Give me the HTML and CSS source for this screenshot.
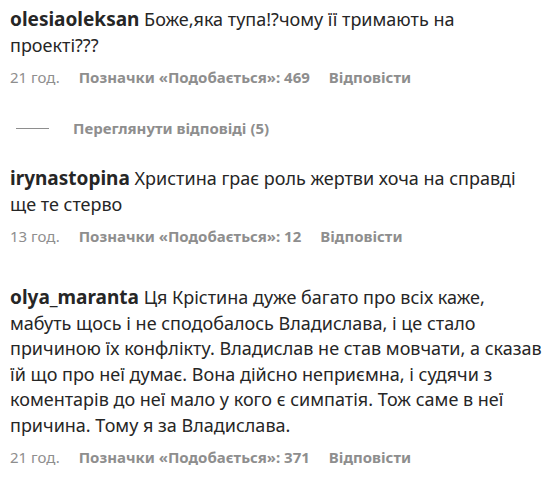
FILE: index.html
```html
<!DOCTYPE html>
<html>
<head>
<meta charset="utf-8">
<link rel="stylesheet" href="styles.css">
</head>
<body>
<ul class="comments">
  <li class="comment has-replies">
    <p class="text"><span class="user">olesiaoleksan</span> Боже,яка тупа!?чому її тримають на<br>проекті???</p>
    <div class="meta"><span class="time">21 год.</span><span class="likes">Позначки «Подобається»: 469</span><span class="reply">Відповісти</span></div>
    <div class="replies"><span class="dash"></span><span class="view">Переглянути відповіді (5)</span></div>
  </li>
  <li class="comment">
    <p class="text"><span class="user">irynastopina</span> Христина грає роль жертви хоча на справді<br>ще те стерво</p>
    <div class="meta"><span class="time">13 год.</span><span class="likes">Позначки «Подобається»: 12</span><span class="reply">Відповісти</span></div>
  </li>
  <li class="comment">
    <p class="text"><span class="user">olya_maranta</span> Ця Крістина дуже багато про всіх каже,<br>мабуть щось і не сподобалось Владислава, і це стало<br>причиною їх конфлікту. Владислав не став мовчати, а сказав<br>їй що про неї думає. Вона дійсно неприємна, і судячи з<br>коментарів до неї мало у кого є симпатія. Тож саме в неї<br>причина. Тому я за Владислава.</p>
    <div class="meta"><span class="time">21 год.</span><span class="likes">Позначки «Подобається»: 371</span><span class="reply">Відповісти</span></div>
  </li>
</ul>
</body>
</html>
```

FILE: styles.css
```css
html, body {
  margin: 0;
  padding: 0;
  background: #ffffff;
}
body {
  font-family: "Noto Sans", "Open Sans", sans-serif;
  color: #262626;
}
.comments {
  list-style: none;
  margin: 0;
  padding: 7px 0 0 10px;
  width: 534px;
}
.comment {
  display: flex;
  flex-direction: column;
  padding-bottom: 39px;
}
.comment.has-replies {
  padding-bottom: 28px;
}
.comment:last-child {
  padding-bottom: 0;
}
.text {
  margin: 0;
  font-size: 18px;
  line-height: 25.5px;
  white-space: nowrap;
}
.user {
  font-size: 19px;
  font-weight: 700;
}
.meta {
  display: flex;
  gap: 19px;
  margin-top: 9px;
  font-size: 15px;
  line-height: 20px;
  color: #8e8e8e;
}
.likes, .reply {
  font-weight: 700;
}
.replies {
  display: flex;
  align-items: center;
  gap: 24px;
  margin-top: 31px;
  padding-left: 6px;
  font-size: 15px;
  line-height: 20px;
  color: #8e8e8e;
  font-weight: 700;
}
.dash {
  width: 33px;
  height: 1px;
  background: #8e8e8e;
}
```
